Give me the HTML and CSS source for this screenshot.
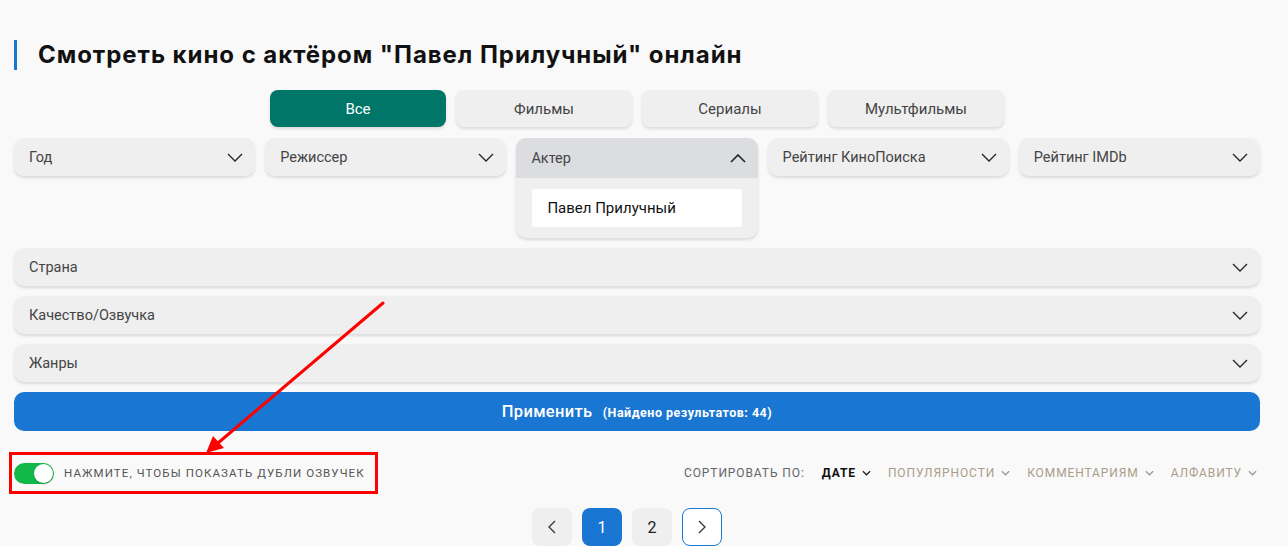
FILE: index.html
```html
<!DOCTYPE html>
<html lang="ru">
<head>
<meta charset="utf-8">
<link rel="stylesheet" href="styles.css">
</head>
<body>
<div class="page">
  <h1 class="title">Смотреть кино с актёром "Павел Прилучный" онлайн</h1>

  <div class="tabs">
    <button class="tab active">Все</button>
    <button class="tab">Фильмы</button>
    <button class="tab">Сериалы</button>
    <button class="tab">Мультфильмы</button>
  </div>

  <div class="filters">
    <div class="drop"><div class="drop-head"><span>Год</span><svg class="chev" viewBox="0 0 16 9"><path d="M1 1l7 7 7-7"/></svg></div></div>
    <div class="drop"><div class="drop-head"><span>Режиссер</span><svg class="chev" viewBox="0 0 16 9"><path d="M1 1l7 7 7-7"/></svg></div></div>
    <div class="drop open"><div class="drop-head"><span>Актер</span><svg class="chev" viewBox="0 0 16 9"><path d="M1 8l7-7 7 7"/></svg></div>
      <div class="drop-body"><div class="chip">Павел Прилучный</div></div>
    </div>
    <div class="drop"><div class="drop-head"><span>Рейтинг КиноПоиска</span><svg class="chev" viewBox="0 0 16 9"><path d="M1 1l7 7 7-7"/></svg></div></div>
    <div class="drop"><div class="drop-head"><span>Рейтинг IMDb</span><svg class="chev" viewBox="0 0 16 9"><path d="M1 1l7 7 7-7"/></svg></div></div>
  </div>

  <div class="rows">
    <div class="drop-head wide"><span>Страна</span><svg class="chev" viewBox="0 0 16 9"><path d="M1 1l7 7 7-7"/></svg></div>
    <div class="drop-head wide"><span>Качество/Озвучка</span><svg class="chev" viewBox="0 0 16 9"><path d="M1 1l7 7 7-7"/></svg></div>
    <div class="drop-head wide"><span>Жанры</span><svg class="chev" viewBox="0 0 16 9"><path d="M1 1l7 7 7-7"/></svg></div>
  </div>

  <button class="apply">Применить <small>(Найдено результатов: 44)</small></button>

  <div class="bar">
    <label class="dubs">
      <span class="switch"><span class="knob"></span></span>
      <span class="dubs-text">Нажмите, чтобы показать дубли озвучек</span>
    </label>
    <div class="sort">
      <span class="sort-label">Сортировать по:</span>
      <span class="sort-item current">Дате <svg viewBox="0 0 10 6"><path d="M1 1l4 4 4-4"/></svg></span>
      <span class="sort-item">Популярности <svg viewBox="0 0 10 6"><path d="M1 1l4 4 4-4"/></svg></span>
      <span class="sort-item">Комментариям <svg viewBox="0 0 10 6"><path d="M1 1l4 4 4-4"/></svg></span>
      <span class="sort-item">Алфавиту <svg viewBox="0 0 10 6"><path d="M1 1l4 4 4-4"/></svg></span>
    </div>
  </div>

  <div class="pager">
    <span class="pg"><svg viewBox="0 0 8 14"><path d="M7 1L1 7l6 6"/></svg></span>
    <span class="pg cur">1</span>
    <span class="pg">2</span>
    <span class="pg next"><svg viewBox="0 0 8 14"><path d="M1 1l6 6-6 6"/></svg></span>
  </div>

  <svg class="annot" viewBox="0 0 1288 546" width="1288" height="546">
    <line x1="383" y1="303" x2="218" y2="443" stroke="#ff0000" stroke-width="3" stroke-linecap="round"/>
    <polygon points="206,453 213,436 224,448" fill="#ff0000"/>
  </svg>
</div>
</body>
</html>
```

FILE: styles.css
```css
* { box-sizing: border-box; }
html, body { margin: 0; padding: 0; background: #f9f9f9; }
body { font-family: Roboto, "Noto Sans", sans-serif; color: #333; }
.page { position: relative; width: 1288px; height: 546px; overflow: hidden; padding: 40px 28px 0 14px; }

.title {
  margin: 0;
  border-left: 3px solid #1976d2;
  padding-left: 21px;
  height: 30px;
  font-family: Inter, "Noto Sans", sans-serif;
  font-weight: 700;
  font-size: 24px;
  line-height: 30px;
  color: #111;
  letter-spacing: 0.95px;
}

.tabs { display: flex; justify-content: center; gap: 10px; margin-top: 20px; }
.tab {
  width: 176px; height: 37px;
  border: 0; border-radius: 8px;
  background: #efefef;
  box-shadow: 0 2px 3px rgba(0,0,0,0.12);
  font-family: Roboto, sans-serif; font-size: 15px; color: #444;
  padding: 0;
}
.tab.active { background: #007668; color: #fff; }

.filters { display: grid; grid-template-columns: repeat(5, 1fr); gap: 10px; margin-top: 11px; align-items: start; height: 100px; }
.drop { border-radius: 10px; background: #efefef; box-shadow: 0 2px 3px rgba(0,0,0,0.12); overflow: hidden; }
.drop-head {
  height: 38px; display: flex; align-items: center; justify-content: space-between;
  padding: 0 12px 0 15px;
  font-size: 14.5px; color: #444; background: #efefef; border-radius: 10px;
}
.chev { width: 16px; height: 9px; fill: none; stroke: #222; stroke-width: 1.3; }
.drop.open .drop-head { background: #dcdde1; border-radius: 0; height: 40px; }
.drop.open .chev { stroke-width: 1.6; }
.drop-body { padding: 11px 16px 11px 16px; }
.chip { background: #fff; border-radius: 3px; height: 38px; display: flex; align-items: center; padding-left: 15px; font-size: 15px; color: #111; }

.rows { display: flex; flex-direction: column; gap: 10px; margin-top: 10px; }
.wide { box-shadow: 0 2px 3px rgba(0,0,0,0.12); }

.apply {
  display: block; width: 100%; height: 39px; margin-top: 10px;
  border: 0; border-radius: 10px; background: #1976d2; color: #fff;
  font-family: Roboto, sans-serif; font-size: 16.5px; font-weight: 500; padding: 0;
  letter-spacing: 0.3px;
}
.apply small { font-size: 12.5px; font-weight: 700; margin-left: 6px; letter-spacing: 0.5px; }

.bar { display: flex; justify-content: space-between; align-items: center; margin-top: 21px; }
.dubs {
  display: flex; align-items: center; gap: 10px;
  border: 3px solid #ff0000; margin-left: -5px; padding: 6px 8px 6px 2px; height: 42px; width: 369px;
}
.switch { width: 40px; height: 21px; border-radius: 11px; background: #13b84a; position: relative; display: inline-block; flex: none; }
.knob { position: absolute; right: 1px; top: 1px; width: 19px; height: 19px; border-radius: 50%; background: #fff; box-shadow: 0 1px 2px rgba(0,0,0,0.2); }
.dubs-text { text-transform: uppercase; font-size: 11.5px; letter-spacing: 1.1px; color: #555; white-space: nowrap; }

.sort { display: flex; align-items: center; gap: 17px; font-size: 12px; letter-spacing: 0.9px; text-transform: uppercase; color: #8e8e8e; padding-right: 3px; }
.sort-label { color: #666; margin-right: 0; }
.sort-item { color: #a99d8a; display: inline-flex; align-items: center; gap: 6px; white-space: nowrap; }
.sort-item svg { width: 9px; height: 6px; fill: none; stroke: #999; stroke-width: 1.4; }
.sort-item.current { color: #111; font-weight: 700; }
.sort-item.current svg { stroke: #222; }

.pager { display: flex; justify-content: center; gap: 10px; margin-top: 14px; margin-right: 20px; }
.pg {
  width: 40px; height: 38px; border-radius: 8px; background: #efefef;
  display: flex; align-items: center; justify-content: center;
  font-size: 16px; color: #222;
}
.pg svg { width: 8px; height: 14px; fill: none; stroke: #333; stroke-width: 1.3; }
.pg.cur { background: #1976d2; color: #fff; }
.pg.next { background: #fff; border: 1px solid #1976d2; }

.annot { position: absolute; left: 0; top: 0; pointer-events: none; }
```
